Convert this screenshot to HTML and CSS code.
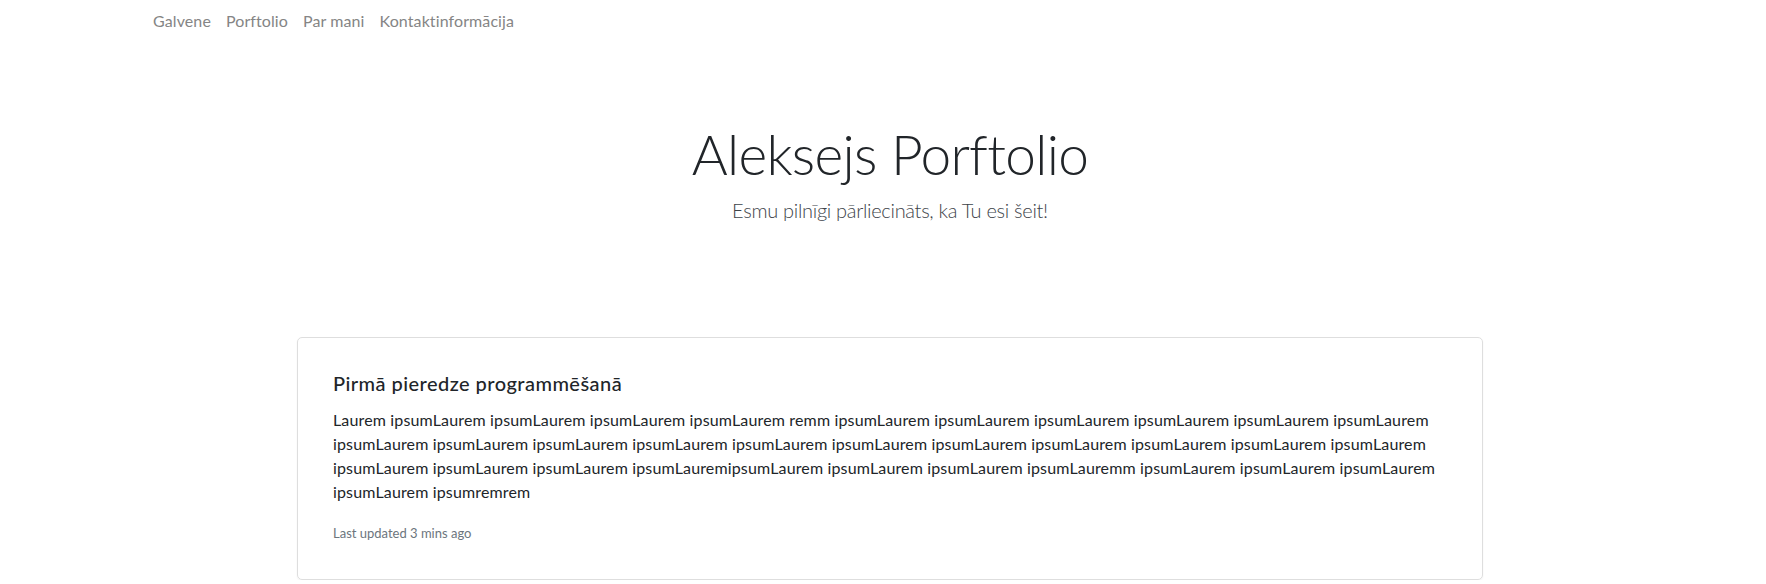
FILE: index.html
```html
<!DOCTYPE html>
<html lang="lv">
<head>
<meta charset="utf-8">
<title>Aleksejs Porftolio</title>
<link rel="stylesheet" href="styles.css">
</head>
<body>
<nav class="topnav">
  <a class="nav-link" href="#">Galvene</a>
  <a class="nav-link" href="#">Porftolio</a>
  <a class="nav-link" href="#">Par mani</a>
  <a class="nav-link" href="#">Kontaktinformācija</a>
</nav>
<main class="page">
  <header class="hero">
    <h1 class="hero-title">Aleksejs Porftolio</h1>
    <p class="hero-lead">Esmu pilnīgi pārliecināts, ka Tu esi šeit!</p>
  </header>
  <section class="card">
    <h5 class="card-title">Pirmā pieredze programmēšanā</h5>
    <p class="card-text">Laurem ipsumLaurem ipsumLaurem ipsumLaurem ipsumLaurem remm ipsumLaurem ipsumLaurem ipsumLaurem ipsumLaurem ipsumLaurem ipsumLaurem ipsumLaurem ipsumLaurem ipsumLaurem ipsumLaurem ipsumLaurem ipsumLaurem ipsumLaurem ipsumLaurem ipsumLaurem ipsumLaurem ipsumLaurem ipsumLaurem ipsumLaurem ipsumLaurem ipsumLauremipsumLaurem ipsumLaurem ipsumLaurem ipsumLauremm ipsumLaurem ipsumLaurem ipsumLaurem ipsumLaurem ipsumremrem</p>
    <p class="card-meta">Last updated 3 mins ago</p>
  </section>
</main>
</body>
</html>
```
FILE: styles.css
```css
* { box-sizing: border-box; }

body {
  margin: 0;
  background: #fff;
  color: #212529;
  font-family: Lato, "Open Sans", sans-serif;
  font-size: 16px;
  line-height: 1.5;
}

.topnav {
  display: flex;
  padding: 9px 0 8px 145px;
}

.nav-link {
  color: #858585;
  text-decoration: none;
  padding: 0 7px 0 8px;
  font-size: 16px;
  letter-spacing: 0.1px;
  line-height: 24px;
}

.page {
  padding-left: 14px;
}

.hero {
  text-align: center;
  padding-top: 80px;
}

.hero-title {
  margin: 0;
  font-size: 55px;
  font-weight: 300;
  letter-spacing: -0.7px;
  line-height: 66px;
  color: #212529;
}

.hero-lead {
  margin: 8px 0 0;
  font-size: 20px;
  font-weight: 300;
  letter-spacing: -0.3px;
  line-height: 30px;
  color: #3d4349;
}

.card {
  width: 1186px;
  margin: 112px auto 0;
  border: 1px solid #dedede;
  border-radius: 5px;
  box-shadow: 0 1px 2px rgba(0, 0, 0, 0.05);
  padding: 33px 35px 36px 35px;
}

.card-title {
  margin: 0 0 13px;
  font-size: 20px;
  font-weight: 500;
  letter-spacing: 0.45px;
  line-height: 24px;
  color: #212529;
}

.card-text {
  margin: 0 0 19px;
  font-size: 16px;
  letter-spacing: 0.15px;
  line-height: 24px;
  color: #212529;
}

.card-meta {
  margin: 0;
  font-size: 13px;
  line-height: 20px;
  color: #6c757d;
}
```
